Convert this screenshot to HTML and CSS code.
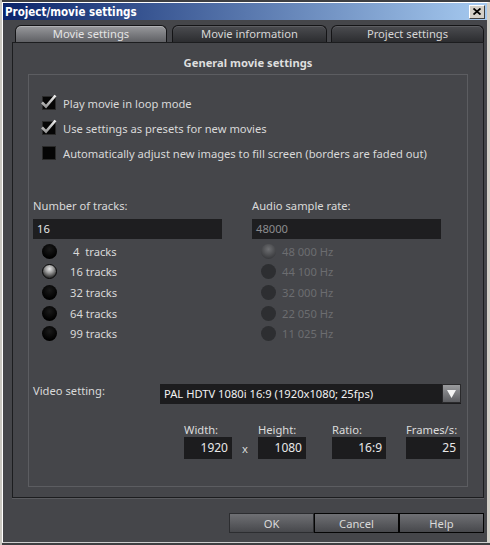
FILE: index.html
```html
<!DOCTYPE html>
<html lang="en">
<head>
    <meta charset="UTF-8">
    <title>Project/movie settings</title>
    <link rel="stylesheet" href="styles.css">
</head>
<body>
    <div class="window">
        <div class="titlebar">
            <span class="title">Project/movie settings</span>
            <span class="close">
                <svg width="8" height="7" viewBox="0 0 8 7"><path d="M0.5 0.5 L7.5 6.5 M7.5 0.5 L0.5 6.5" stroke="#000" stroke-width="1.8"/></svg>
            </span>
        </div>

        <div class="client">
            <div class="tabs">
                <div class="tab tab-1 active">Movie settings</div>
                <div class="tab tab-2">Movie information</div>
                <div class="tab tab-3">Project settings</div>
            </div>

            <div class="panel">
                <div class="panel-title">General movie settings</div>

                <div class="group">
                    <div class="checks">
                        <label class="check-row">
                            <span class="checkbox checked"><svg width="18" height="16" viewBox="0 0 18 16"><path d="M2 8.5 L6 12.5 L15.5 1.5" fill="none" stroke="url(#chk)" stroke-width="2.6"/><defs><linearGradient id="chk" x1="0" y1="0" x2="0" y2="1"><stop offset="0" stop-color="#f2f2f2"/><stop offset="1" stop-color="#9a9a9a"/></linearGradient></defs></svg></span>
                            Play movie in loop mode
                        </label>
                        <label class="check-row">
                            <span class="checkbox checked"><svg width="18" height="16" viewBox="0 0 18 16"><path d="M2 8.5 L6 12.5 L15.5 1.5" fill="none" stroke="url(#chk)" stroke-width="2.6"/></svg></span>
                            Use settings as presets for new movies
                        </label>
                        <label class="check-row">
                            <span class="checkbox"></span>
                            Automatically adjust new images to fill screen (borders are faded out)
                        </label>
                    </div>

                    <div class="columns">
                        <div class="col tracks">
                            <div class="field-label">Number of tracks:</div>
                            <div class="text-box">16</div>
                            <div class="radio-list">
                                <div class="radio-row"><span class="radio"></span><span class="pad4">4&nbsp; tracks</span></div>
                                <div class="radio-row"><span class="radio on"></span>16 tracks</div>
                                <div class="radio-row"><span class="radio"></span>32 tracks</div>
                                <div class="radio-row"><span class="radio"></span>64 tracks</div>
                                <div class="radio-row"><span class="radio"></span>99 tracks</div>
                            </div>
                        </div>
                        <div class="col audio disabled">
                            <div class="field-label">Audio sample rate:</div>
                            <div class="text-box">48000</div>
                            <div class="radio-list">
                                <div class="radio-row"><span class="radio on"></span>48 000 Hz</div>
                                <div class="radio-row"><span class="radio"></span>44 100 Hz</div>
                                <div class="radio-row"><span class="radio"></span>32 000 Hz</div>
                                <div class="radio-row"><span class="radio"></span>22 050 Hz</div>
                                <div class="radio-row"><span class="radio"></span>11 025 Hz</div>
                            </div>
                        </div>
                    </div>

                    <div class="video-row">
                        <div class="video-label">Video setting:</div>
                        <div class="select">
                            <span class="select-text">PAL HDTV 1080i 16:9 (1920x1080; 25fps)</span>
                            <span class="select-btn">
                                <svg width="9" height="8" viewBox="0 0 9 8"><path d="M0 0 H9 L4.5 8 Z" fill="#f4f4f4"/></svg>
                            </span>
                        </div>
                    </div>

                    <div class="dims">
                        <div class="dim w48">
                            <div class="field-label">Width:</div>
                            <div class="num-box">1920</div>
                        </div>
                        <div class="times">x</div>
                        <div class="dim w48">
                            <div class="field-label">Height:</div>
                            <div class="num-box">1080</div>
                        </div>
                        <div class="dim w54 gap-left">
                            <div class="field-label">Ratio:</div>
                            <div class="num-box">16:9</div>
                        </div>
                        <div class="dim w54 gap-left2">
                            <div class="field-label">Frames/s:</div>
                            <div class="num-box">25</div>
                        </div>
                    </div>
                </div>
            </div>

            <div class="buttons">
                <button class="btn default">OK</button>
                <button class="btn">Cancel</button>
                <button class="btn">Help</button>
            </div>
        </div>
    </div>
</body>
</html>
```

FILE: styles.css
```css
* {
    box-sizing: border-box;
}

body {
    margin: 0;
    width: 490px;
    height: 545px;
    overflow: hidden;
    background: #3e3f42;
    border-left: 2px solid #c9c7c0;
    font-family: "Noto Sans", "Open Sans", sans-serif;
    font-size: 11.2px;
    color: #d9d9d9;
}

.window {
    margin-top: 2px;
    width: 488px;
    height: 541px;
    border-top: 1px solid #ffffff;
    border-left: 1px solid #ffffff;
    border-right: 3px solid #d4d0c8;
    border-bottom: 1px solid #cfcfcf;
    background: #45464a;
    display: flex;
    flex-direction: column;
}

/* title bar */
.titlebar {
    height: 17px;
    display: flex;
    align-items: center;
    justify-content: space-between;
    padding: 0 2px 0 2px;
    background: linear-gradient(to right, #0a246a, #a6caf0);
}

.title {
    font-family: "DejaVu Sans Condensed", "DejaVu Sans", sans-serif;
    font-stretch: condensed;
    font-weight: bold;
    font-size: 11.5px;
    color: #ffffff;
}

.close {
    width: 16px;
    height: 14px;
    display: flex;
    align-items: center;
    justify-content: center;
    background: #d4d0c8;
    border: 1px solid;
    border-color: #ffffff #404040 #404040 #ffffff;
}

/* client area */
.client {
    flex: 1;
    padding: 5px 3px 0 9px;
}

.tabs {
    display: flex;
    height: 17px;
    margin-left: 3px;
}

.tab {
    height: 17px;
    border: 1px solid #141416;
    border-bottom: none;
    border-radius: 6px 6px 0 0;
    background: linear-gradient(#4b4c50, #2c2d30);
    box-shadow: inset 0 1px 0 #5c5d61;
    color: #d6d6d6;
    text-align: center;
    line-height: 16px;
}

.tab.active {
    background: linear-gradient(#98999c, #5f6064);
    box-shadow: inset 0 1px 0 #b0b1b4;
    color: #e4e4e4;
}

.tab-1 { width: 152px; margin-right: 5px; }
.tab-2 { width: 155px; margin-right: 4px; }
.tab-3 { width: 153px; margin-right: -1px; }

.panel {
    width: 472px;
    height: 456px;
    border: 1px solid #1c1d1f;
    box-shadow: 0 1px 0 #5a5b5f;
    padding: 13px 0 0 15px;
}

.panel-title {
    width: 440px;
    text-align: center;
    font-weight: bold;
    line-height: 14px;
    color: #dedede;
}

.group {
    margin-top: 4px;
    width: 440px;
    height: 413px;
    border: 1px solid #5c5d61;
    padding: 20px 0 0 4px;
}

/* checkboxes */
.checks {
    display: flex;
    flex-direction: column;
    gap: 9px;
    margin-left: 9px;
}

.check-row {
    display: flex;
    align-items: center;
    height: 16px;
    gap: 7px;
}

.checkbox {
    width: 14px;
    height: 14px;
    background: #050505;
    border: 1px solid #2a2a2a;
    position: relative;
}

.checkbox svg {
    position: absolute;
    left: -3px;
    top: -3px;
}

/* two columns */
.columns {
    display: flex;
    gap: 30px;
    margin-top: 38px;
}

.col {
    width: 189px;
}

.field-label {
    line-height: 14px;
    white-space: nowrap;
}

.text-box {
    margin-top: 6px;
    height: 20px;
    background: #1e1e20;
    padding-left: 4px;
    line-height: 20px;
    color: #e6e6e6;
}

.radio-list {
    margin-top: 2px;
}

.radio-row {
    height: 20.6px;
    display: flex;
    align-items: center;
    padding-left: 9px;
}

.radio {
    width: 15px;
    height: 15px;
    border-radius: 50%;
    background: radial-gradient(circle at 50% 35%, #1a1a1a, #000 70%);
    margin-right: 13px;
}

.radio.on {
    background: radial-gradient(circle at 50% 30%, #e8e8e8 0, #9c9c9c 35%, #333 75%);
    border: 1.5px solid #080808;
}

.pad4 {
    padding-left: 3px;
}

.audio .radio {
    margin-right: 6px;
    background: #2d2e31;
}

.audio .radio.on {
    border: none;
    background: radial-gradient(circle at 50% 35%, #6e6f72, #3a3b3e 75%);
}

.disabled .text-box {
    color: #8c8c8e;
}

.disabled .radio-row {
    color: #6c6d70;
}

/* video setting */
.video-row {
    display: flex;
    margin-top: 40px;
    height: 20px;
}

.video-label {
    width: 127px;
    line-height: 14px;
}

.select {
    width: 301px;
    height: 20px;
    background: #1c1c1e;
    display: flex;
    align-items: center;
    justify-content: space-between;
}

.select-text {
    padding-left: 4px;
    color: #f2f2f2;
}

.select-btn {
    width: 19px;
    height: 19px;
    display: flex;
    align-items: center;
    justify-content: center;
    background: linear-gradient(#9a9b9e, #5c5d61);
    border: 1px solid #2a2a2c;
}

/* dimension fields */
.dims {
    display: flex;
    margin-top: 19px;
    margin-left: 151px;
}

.dim .field-label {
    color: #dcdcdc;
}

.num-box {
    height: 22px;
    background: #1c1c1e;
    text-align: right;
    padding-right: 4px;
    line-height: 22px;
    font-size: 12px;
    color: #e8e8e8;
}

.w48 { width: 48px; }
.w54 { width: 54px; }
.gap-left { margin-left: 26px; }
.gap-left2 { margin-left: 20px; }

.times {
    width: 26px;
    padding-top: 18px;
    text-align: center;
}

/* buttons */
.buttons {
    display: flex;
    justify-content: flex-end;
    margin-top: 15px;
}

.btn {
    width: 85px;
    height: 20px;
    padding: 0;
    font-family: "Noto Sans", "Open Sans", sans-serif;
    font-size: 11.2px;
    color: #dadada;
    background: linear-gradient(#6f7074, #47484c);
    border: 1.5px solid #050505;
}

.btn.default {
    border-color: #2c2d30;
}
```
